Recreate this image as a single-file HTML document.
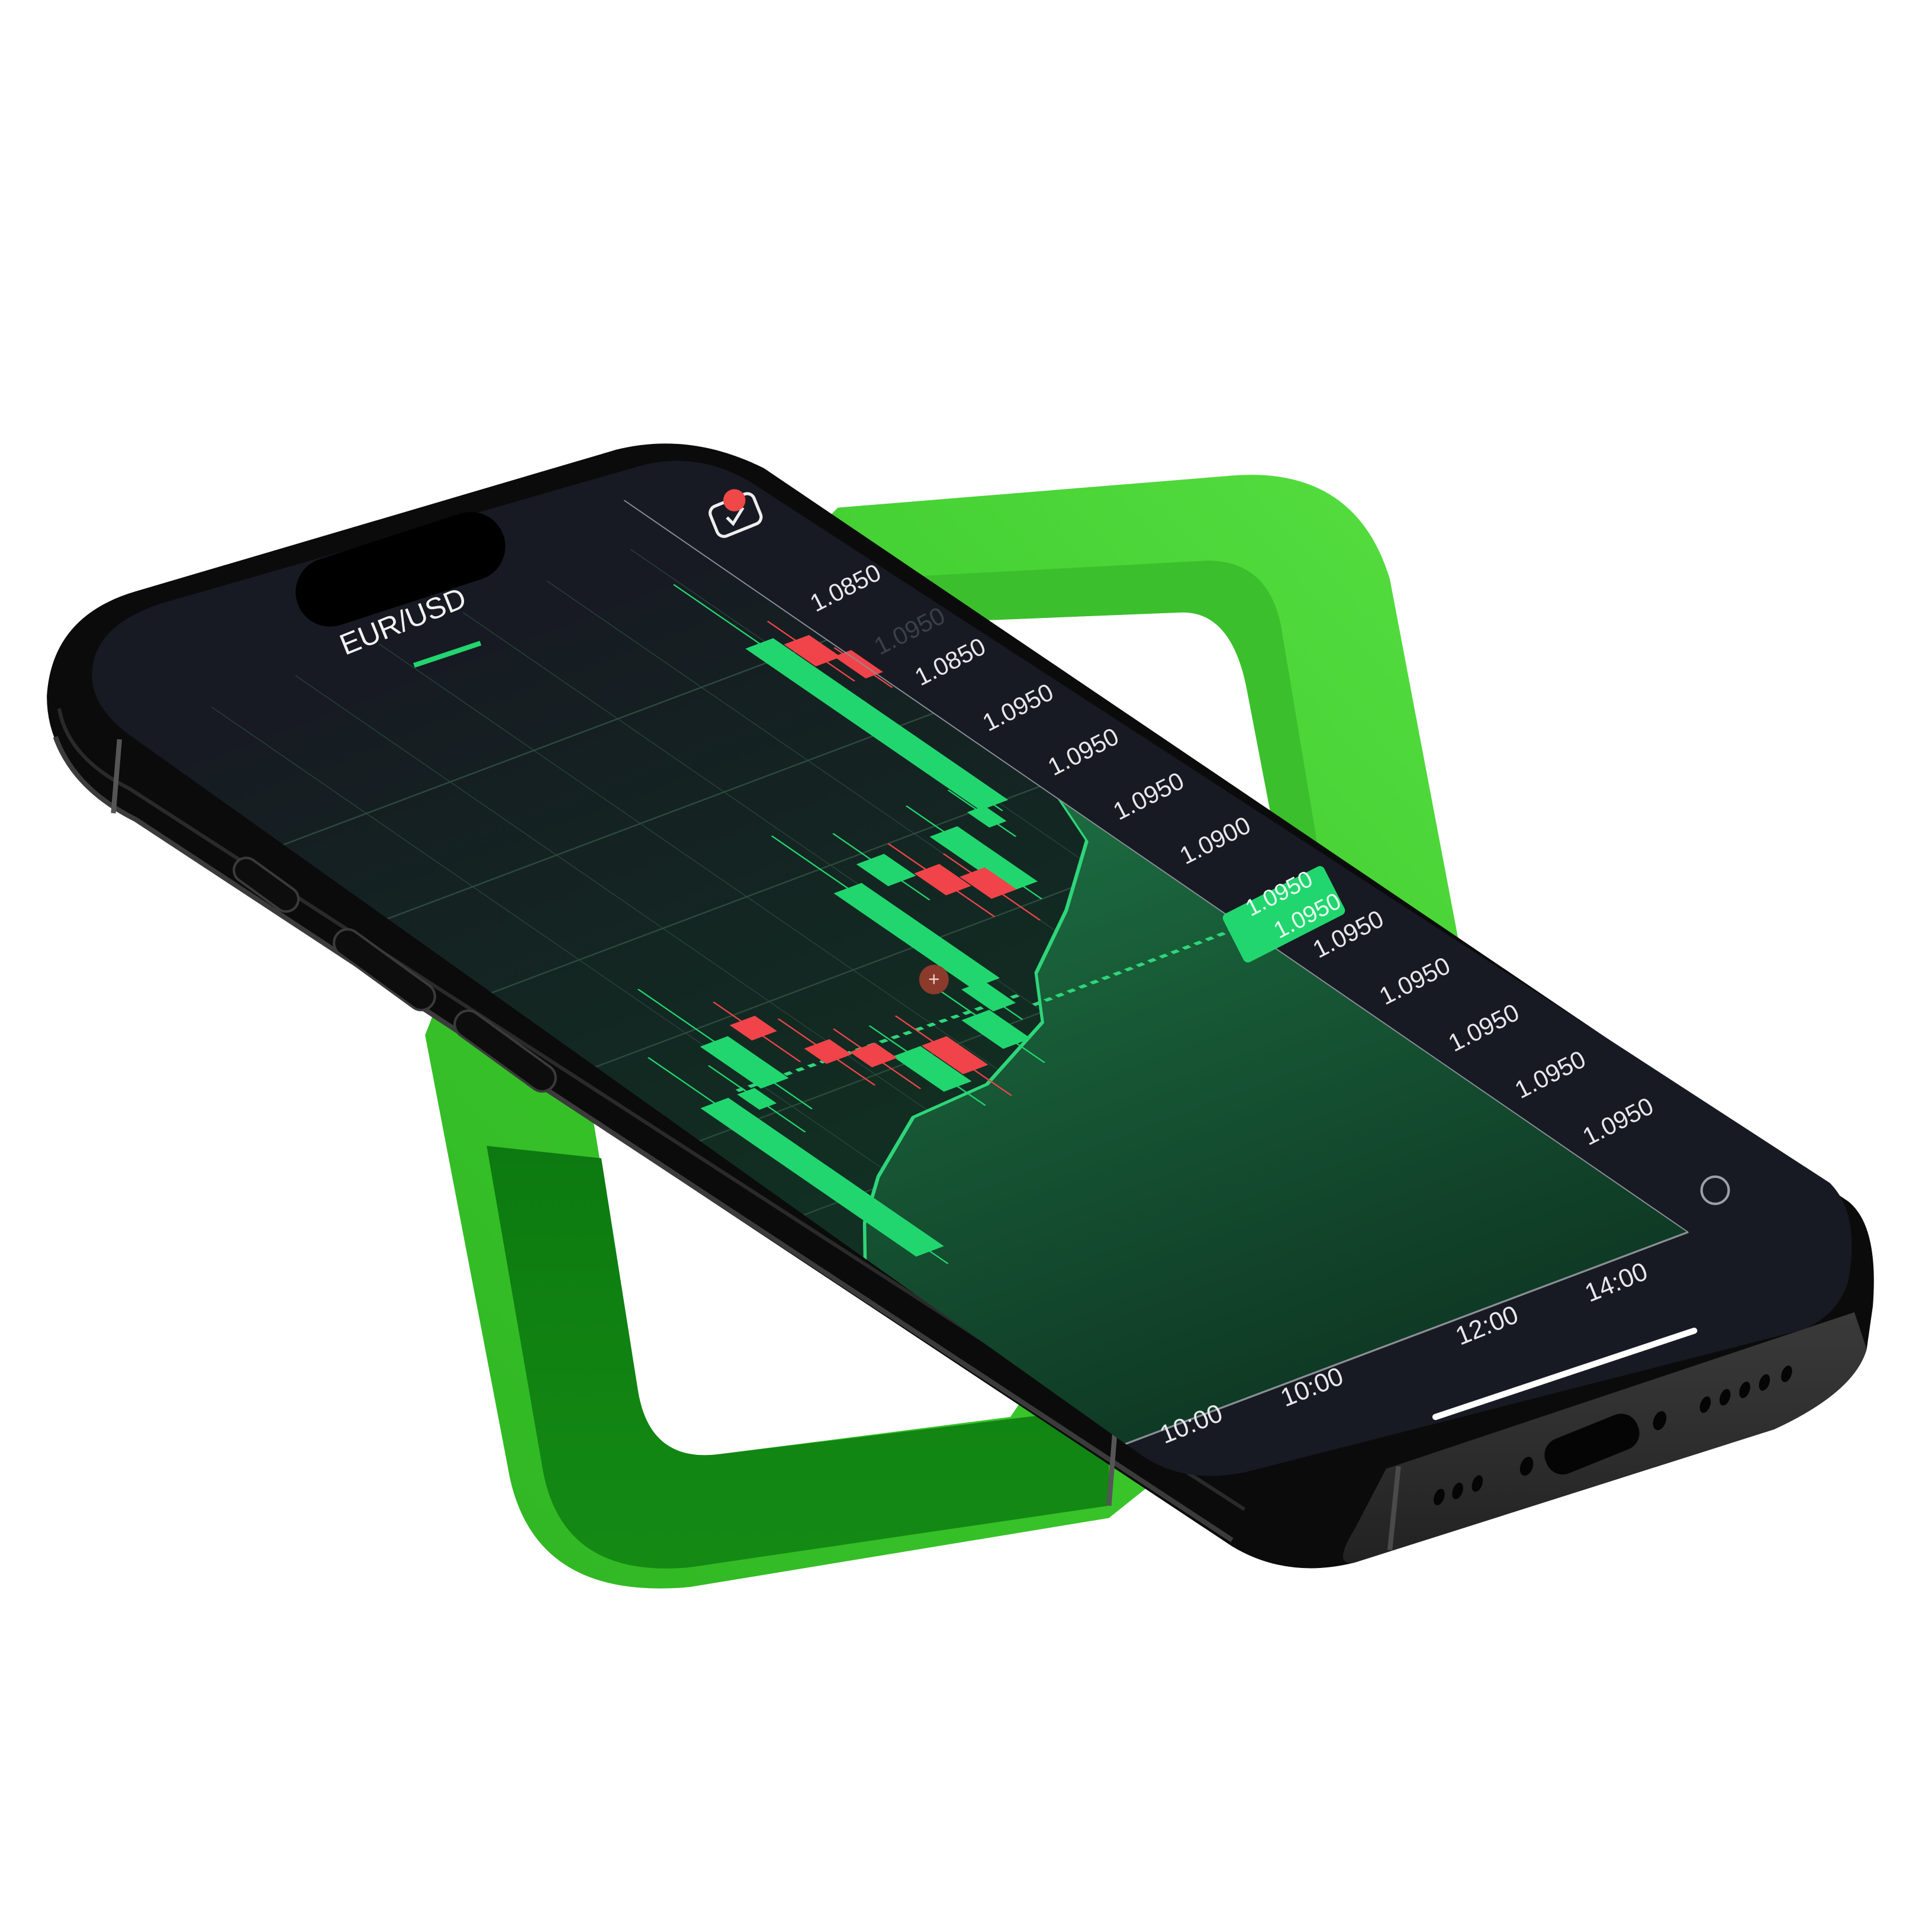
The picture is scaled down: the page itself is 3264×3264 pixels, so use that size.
<!DOCTYPE html>
<html><head><meta charset="utf-8"><style>
html,body{margin:0;padding:0;background:#fff;width:3264px;height:3264px;overflow:hidden}
svg{display:block}
text{font-family:"Liberation Sans",sans-serif}
</style></head><body>
<svg width="3264" height="3264" viewBox="0 0 1568 1568" xmlns="http://www.w3.org/2000/svg">
<defs>
<linearGradient id="gf" x1="0" y1="1" x2="1" y2="0">
<stop offset="0" stop-color="#2fb523"/><stop offset="0.5" stop-color="#3cc92c"/><stop offset="1" stop-color="#56de40"/>
</linearGradient>
<linearGradient id="gdark" x1="0" y1="0" x2="0" y2="1">
<stop offset="0" stop-color="#0c7a10"/><stop offset="1" stop-color="#148a14"/>
</linearGradient>
<linearGradient id="chartbg" x1="0" y1="0" x2="0" y2="1">
<stop offset="0" stop-color="#161c22"/><stop offset="0.5" stop-color="#122a22"/><stop offset="1" stop-color="#0f3a25"/>
</linearGradient>
<linearGradient id="area" x1="0" y1="0" x2="0" y2="1">
<stop offset="0" stop-color="#1c6b40"/><stop offset="1" stop-color="#0f3a25"/>
</linearGradient>
<linearGradient id="endface" x1="0" y1="0" x2="0" y2="1">
<stop offset="0" stop-color="#3a3a3a"/><stop offset="1" stop-color="#222"/>
</linearGradient>
<clipPath id="scr"><path d="M 75 555 Q 70 510 130 490 L 520 378 Q 570 365 615 395 L 1485 960 Q 1510 985 1500 1040 Q 1490 1070 1460 1080 L 1010 1195 Q 960 1205 925 1180 L 110 600 Q 80 580 75 555 Z"/></clipPath>
</defs>

<!-- green frame -->
<path fill-rule="evenodd" fill="url(#gf)" d="M 680 412 L 1000 386 Q 1100 378 1128 470 L 1185 770 L 1190 1000 L 900 1232 L 560 1288 Q 430 1300 412 1190 L 345 840 L 400 700 Z
M 760 505 L 960 497 Q 1000 497 1012 560 L 1058 800 L 820 1150 L 585 1180 Q 528 1188 518 1130 L 480 900 Z"/>
<path fill="url(#gdark)" d="M 488 940 L 518 1130 Q 528 1188 585 1180 L 900 1142 L 900 1222 L 560 1272 Q 455 1282 440 1190 L 395 930 Z"/>
<path fill="#3cbf2c" d="M 700 470 L 980 455 Q 1030 455 1040 510 L 1075 720 L 1058 800 L 1012 560 Q 1000 497 960 497 L 760 505 Z"/>

<!-- phone body -->
<path fill="#0b0b0c" d="M 38 565 Q 42 500 110 480 L 500 365 Q 560 350 620 380 L 1500 975 Q 1525 995 1520 1060 L 1515 1095 Q 1505 1130 1440 1160 L 1100 1268 Q 1045 1282 1000 1255 L 95 655 Q 38 620 38 565 Z"/>
<path fill="url(#endface)" d="M 1125 1192 L 1505 1065 L 1515 1095 Q 1505 1130 1440 1160 L 1100 1268 Q 1080 1272 1100 1240 Z"/>
<path d="M 45 598 Q 60 640 110 665 L 1000 1250" stroke="#3b3b3b" stroke-width="4" fill="none"/>
<path d="M 48 575 Q 55 615 105 640 L 1010 1225" stroke="#2a2a2a" stroke-width="3" fill="none"/>
<line x1="97" y1="600" x2="92" y2="660" stroke="#555" stroke-width="4"/>
<line x1="905" y1="1160" x2="900" y2="1222" stroke="#555" stroke-width="4"/>
<line x1="1135" y1="1190" x2="1128" y2="1258" stroke="#4a4a4a" stroke-width="4"/>
<g fill="#0d0d0d" stroke="#3a3a3a" stroke-width="2">
<rect x="-30" y="-10" width="60" height="20" rx="10" transform="translate(216,718) rotate(36)"/>
<rect x="-48" y="-11" width="96" height="22" rx="11" transform="translate(312,787) rotate(36)"/>
<rect x="-48" y="-11" width="96" height="22" rx="11" transform="translate(410,853) rotate(36)"/>
</g>
<g fill="#050505">
<ellipse cx="1168" cy="1215" rx="4" ry="7" transform="rotate(20 1168 1215)"/>
<ellipse cx="1183" cy="1210" rx="4" ry="7" transform="rotate(20 1183 1210)"/>
<ellipse cx="1199" cy="1204" rx="4" ry="7" transform="rotate(20 1199 1204)"/>
<ellipse cx="1239" cy="1190" rx="5" ry="8" transform="rotate(20 1239 1190)"/>
<rect x="-40" y="-15" width="80" height="30" rx="14" transform="translate(1292,1172) rotate(-22)"/>
<ellipse cx="1347" cy="1153" rx="5" ry="8" transform="rotate(20 1347 1153)"/>
<ellipse cx="1384" cy="1140" rx="4" ry="7" transform="rotate(20 1384 1140)"/>
<ellipse cx="1400" cy="1134" rx="4" ry="7" transform="rotate(20 1400 1134)"/>
<ellipse cx="1416" cy="1128" rx="4" ry="7" transform="rotate(20 1416 1128)"/>
<ellipse cx="1432" cy="1122" rx="4" ry="7" transform="rotate(20 1432 1122)"/>
<ellipse cx="1450" cy="1115" rx="4" ry="7" transform="rotate(20 1450 1115)"/>
</g>

<!-- screen -->
<g clip-path="url(#scr)">
<rect x="0" y="300" width="1568" height="1000" fill="#171a23"/>
<g transform="matrix(4.25,-1.6,7.85,5.4,160,620)">
<rect x="-40" y="0" width="140" height="100" fill="url(#chartbg)"/>
<g stroke="#2c4a3c" stroke-width="0.15" fill="none">
<line x1="12" y1="-5" x2="12" y2="100"/><line x1="28" y1="-5" x2="28" y2="100"/><line x1="44" y1="-5" x2="44" y2="100"/><line x1="60" y1="-5" x2="60" y2="100"/><line x1="76" y1="-5" x2="76" y2="100"/><line x1="92" y1="-5" x2="92" y2="100"/>
<line x1="-40" y1="11" x2="100" y2="11"/><line x1="-40" y1="22" x2="100" y2="22"/><line x1="-40" y1="33" x2="100" y2="33"/><line x1="-40" y1="44" x2="100" y2="44"/><line x1="-40" y1="55" x2="100" y2="55"/><line x1="-40" y1="66" x2="100" y2="66"/><line x1="-40" y1="77" x2="100" y2="77"/><line x1="-40" y1="88" x2="100" y2="88"/>
</g>
<path d="M 100 35 L 96 40 L 81 46 L 66 51 L 58 56 L 40 60 L 25 60.5 L 10 65 L 0 69 L -20 80 L -20 100 L 100 100 Z" fill="url(#area)"/>
<path d="M 100 35 L 96 40 L 81 46 L 66 51 L 58 56 L 40 60 L 25 60.5 L 10 65 L 0 69 L -20 80" fill="none" stroke="#2fd57a" stroke-width="0.3"/>
<line x1="60" y1="54" x2="100" y2="54" stroke="#2fd57a" stroke-width="0.35" stroke-dasharray="1.2 1"/>
<line x1="8" y1="51.5" x2="60" y2="52.5" stroke="#2fd57a" stroke-width="0.35" stroke-dasharray="1.2 1"/>
<g stroke-width="0.3">
<g stroke="#22d66f" fill="#22d66f">
<line x1="91" y1="0" x2="91" y2="34"/><rect x="88.5" y="9" width="5" height="24"/>
<line x1="88" y1="30" x2="88" y2="37"/><rect x="86.5" y="33" width="3" height="2"/>
<line x1="80" y1="30" x2="80" y2="44"/><rect x="77.5" y="34" width="5" height="8"/>
<line x1="66" y1="30" x2="66" y2="40"/><rect x="63.5" y="34" width="5" height="3"/>
<line x1="58" y1="28" x2="58" y2="52"/><rect x="55.5" y="36" width="5" height="14"/>
<line x1="56" y1="46" x2="56" y2="55"/><rect x="54" y="50" width="4" height="3"/>
<line x1="51" y1="48" x2="51" y2="60"/><rect x="48.5" y="53" width="5" height="4"/>
<line x1="36" y1="50" x2="36" y2="62"/><rect x="33.5" y="54" width="5" height="5"/>
<line x1="14" y1="38" x2="14" y2="56"/><rect x="11.5" y="46" width="5" height="6"/>
<line x1="9" y1="48" x2="9" y2="58"/><rect x="7.5" y="52" width="3" height="2"/>
<line x1="3" y1="45" x2="3" y2="76"/><rect x="0.5" y="52" width="5" height="22"/>
</g>
<g stroke="#f0444a" fill="#f0444a">
<line x1="96" y1="7" x2="96" y2="16"/><rect x="94" y="10" width="4.5" height="3"/>
<line x1="99.5" y1="12" x2="99.5" y2="18"/><rect x="98" y="13" width="3" height="3"/>
<line x1="76" y1="36" x2="76" y2="46"/><rect x="74" y="39" width="4.5" height="3"/>
<line x1="71" y1="33" x2="71" y2="44"/><rect x="69" y="37" width="4.5" height="3"/>
<line x1="41" y1="50" x2="41" y2="62"/><rect x="39" y="54" width="4.5" height="4"/>
<line x1="31" y1="49" x2="31" y2="58"/><rect x="29" y="52" width="4.5" height="2"/>
<line x1="26" y1="46" x2="26" y2="56"/><rect x="24" y="50" width="4.5" height="2"/>
<line x1="21" y1="42" x2="21" y2="51"/><rect x="19" y="45" width="4.5" height="2"/>
</g>
</g>
<line x1="100" y1="-10" x2="100" y2="100" stroke="#8a8f96" stroke-width="0.25"/>
<line x1="-40" y1="100" x2="100" y2="100" stroke="#8a8f96" stroke-width="0.2"/>
</g>
<circle cx="758" cy="795" r="12" fill="#8b3a2c"/>
<text x="758" y="800" font-size="16" fill="#f0d0c8" text-anchor="middle">+</text>
<g fill="#e6e8ea" font-size="20">
<text transform="translate(662,497) rotate(-27)">1.0850</text>
<text transform="translate(747,557) rotate(-27)">1.0850</text>
<text transform="translate(802,594) rotate(-27)">1.0950</text>
<text transform="translate(855,630) rotate(-27)">1.0950</text>
<text transform="translate(908,666) rotate(-27)">1.0950</text>
<text transform="translate(962,702) rotate(-27)">1.0900</text>
<text transform="translate(1070,778) rotate(-27)">1.0950</text>
<text transform="translate(1124,816) rotate(-27)">1.0950</text>
<text transform="translate(1180,854) rotate(-27)">1.0950</text>
<text transform="translate(1234,892) rotate(-27)">1.0950</text>
<text transform="translate(1289,930) rotate(-27)">1.0950</text>
</g>
<text transform="translate(714,532) rotate(-27)" font-size="20" fill="#3a4048">1.0950</text>
<rect x="-46" y="-22" width="92" height="44" rx="4" transform="translate(1042,742) rotate(-27)" fill="#22d66f"/>
<g fill="#e8fff0" font-size="19">
<text transform="translate(1015,744) rotate(-27)">1.0950</text>
<text transform="translate(1038,762) rotate(-27)">1.0950</text>
</g>
<g fill="#e6e8ea" font-size="21">
<text transform="translate(945,1172) rotate(-22)">10:00</text>
<text transform="translate(1043,1142) rotate(-22)">10:00</text>
<text transform="translate(1185,1092) rotate(-22)">12:00</text>
<text transform="translate(1290,1057) rotate(-22)">14:00</text>
</g>
<line x1="1165" y1="1150" x2="1375" y2="1080" stroke="#fff" stroke-width="5" stroke-linecap="round"/>
<circle cx="1392" cy="966" r="11" fill="none" stroke="#9aa0a8" stroke-width="2"/>
<text transform="translate(280,532) rotate(-22)" font-size="24" fill="#f2f2f2">EUR/USD</text>
<line x1="336" y1="540" x2="390" y2="522" stroke="#22d66f" stroke-width="4"/>
<rect x="-19" y="-13" width="38" height="26" rx="6" transform="translate(597,418) rotate(-22)" fill="none" stroke="#eee" stroke-width="2.5"/>
<path d="M 590 420 L 595 425 L 603 412" fill="none" stroke="#eee" stroke-width="2.5"/>
<circle cx="596" cy="406" r="9" fill="#f04848"/>
</g>
<rect x="-88" y="-28" width="176" height="56" rx="28" transform="translate(325,462) rotate(-18)" fill="#000"/>
</svg>
</body></html>
